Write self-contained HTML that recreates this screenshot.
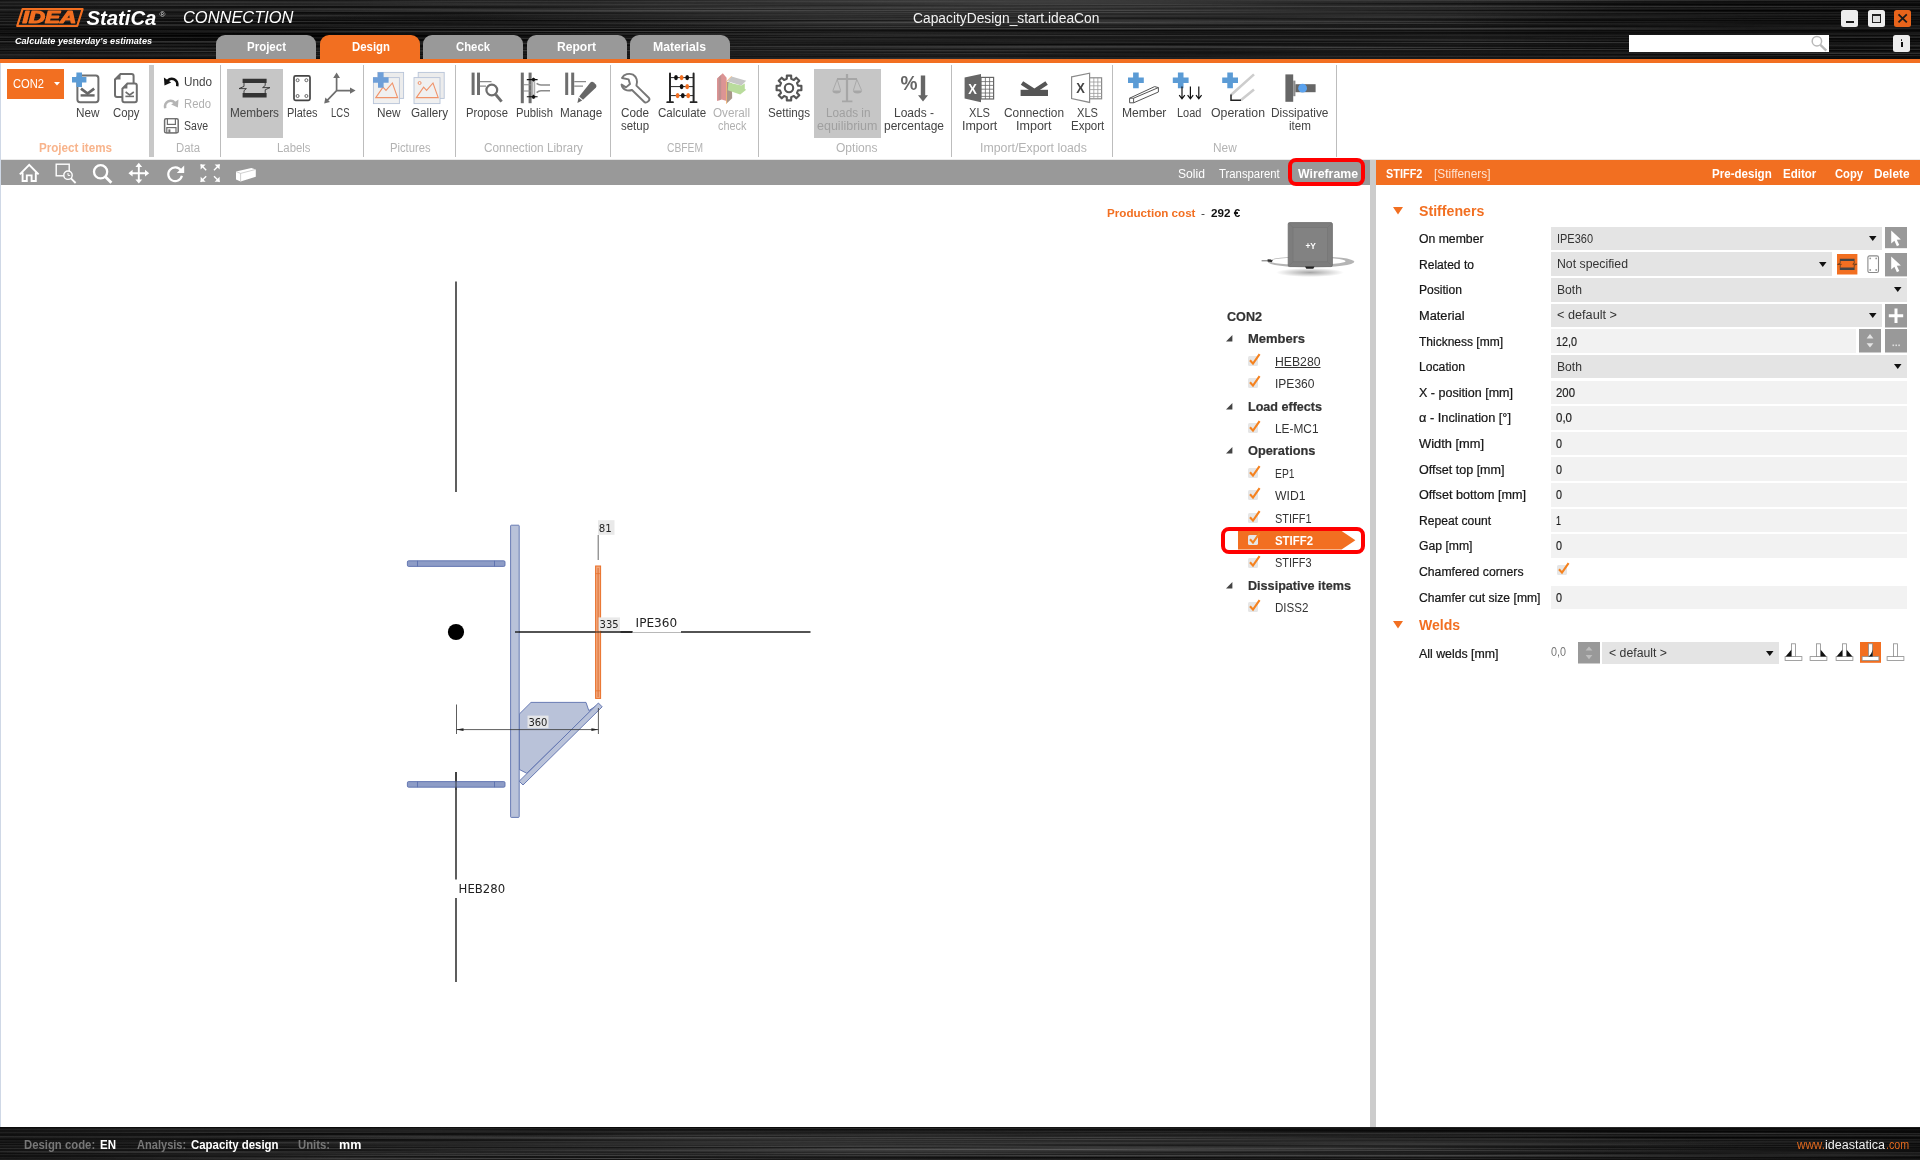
<!DOCTYPE html>
<html lang="en"><head><meta charset="utf-8"><title>IDEA StatiCa Connection</title>
<style>

html,body{margin:0;padding:0;background:#fff;}
body{width:1920px;height:1160px;overflow:hidden;font-family:"Liberation Sans",sans-serif;}
#app{position:relative;width:1920px;height:1160px;overflow:hidden;background:#fff;opacity:.999;}
.t{position:absolute;white-space:pre;display:inline-block;transform-origin:0 50%;}
.b{position:absolute;}
svg{position:absolute;overflow:visible;}
.hdr{left:0;top:0;width:1920px;height:59px;background:linear-gradient(90deg,rgba(0,0,0,.25) 0,rgba(0,0,0,0) 400px,rgba(0,0,0,0) 1450px,rgba(0,0,0,.55) 1750px,rgba(0,0,0,.6) 1920px),radial-gradient(ellipse 620px 30px at 1010px 4px,#3e3e3e 0,#333 40%,rgba(30,30,30,0) 100%),radial-gradient(ellipse 500px 22px at 300px 34px,#050505 0,rgba(10,10,10,0) 100%),linear-gradient(180deg,#1f1f1f 0,#191919 30px,#1c1c1c 59px);}
.ftr{left:0;top:1127px;width:1920px;height:33px;background:radial-gradient(ellipse 760px 16px at 980px 18px,#3a3a3a 0,#303030 45%,rgba(30,30,30,0) 100%),linear-gradient(90deg,rgba(0,0,0,.3) 0,rgba(0,0,0,0) 350px,rgba(0,0,0,0) 1550px,rgba(0,0,0,.4) 1920px),linear-gradient(180deg,#0a0a0a 0,#171717 6px,#191919 20px,#1c1c1c 33px);}
.tab{top:35px;height:24px;width:100px;border-radius:9px 9px 0 0;background:#999;}
.sep{top:65px;width:1px;height:92px;background:#bdbdbd;}
.fld{background:#e4e4e4;height:23px;}
.inp{background:#f2f2f2;height:23px;}
.gbtn{background:#999;height:23px;width:22px;}

</style></head><body>
<div id="app">
<div class="b hdr"></div>
<svg style="left:0;top:0" width="1920" height="59"><defs><filter id="br" x="0" y="0" width="100%" height="100%" color-interpolation-filters="sRGB"><feTurbulence type="fractalNoise" baseFrequency="0.0012 0.75" numOctaves="3" seed="7"/><feColorMatrix values="0 0 0 0 1  0 0 0 0 1  0 0 0 0 1  0.5 0 0 0 -0.2"/></filter><filter id="bk" x="0" y="0" width="100%" height="100%" color-interpolation-filters="sRGB"><feTurbulence type="fractalNoise" baseFrequency="0.0015 0.6" numOctaves="2" seed="21"/><feColorMatrix values="0 0 0 0 0  0 0 0 0 0  0 0 0 0 0  1.5 0 0 0 -0.55"/></filter></defs><rect width="1920" height="59" filter="url(#br)"/><rect width="1920" height="59" filter="url(#bk)"/></svg>
<div class="b" style="left:0px;top:59px;width:1920px;height:4.5px;background:#f26f21;"></div>
<div class="b tab" style="left:216px;background:#999"></div>
<div class="b tab" style="left:320px;background:#f26f21"></div>
<div class="b tab" style="left:423px;background:#999"></div>
<div class="b tab" style="left:527px;background:#999"></div>
<div class="b tab" style="left:630px;background:#999"></div>
<div class="b" style="left:1841px;top:10px;width:17px;height:17px;background:#ededed;border-radius:2.5px;"></div>
<div class="b" style="left:1867.8px;top:10px;width:17px;height:17px;background:#ededed;border-radius:2.5px;"></div>
<div class="b" style="left:1894px;top:10px;width:17px;height:17px;background:#e8641b;border-radius:2.5px;"></div>
<div class="b" style="left:1845.8px;top:20.8px;width:8px;height:1.9px;background:#1a1a1a;"></div>
<div class="b" style="left:1871.8px;top:13.9px;width:9px;height:9px;background:#e0e0e0;border:1.2px solid #222;border-top-width:2.3px;box-sizing:border-box;"></div>
<svg style="left:1894px;top:10px" width="17" height="17" viewBox="0 0 17 17"><path d="M4.5 4.4 L12.8 12.4 M12.8 4.4 L4.5 12.4" stroke="#1a1a1a" stroke-width="1.8" fill="none"/></svg>
<div class="b" style="left:1629px;top:35px;width:199.5px;height:17px;background:#fff;"></div>
<svg style="left:1808px;top:34px" width="22" height="19" viewBox="1808 34 22 19"><circle cx="1816.9" cy="41.2" r="4.7" fill="none" stroke="#b8b8b8" stroke-width="1.5"/><path d="M1820.4 44.9 L1826.3 50.6" stroke="#b8b8b8" stroke-width="2.3"/></svg>
<div class="b" style="left:1893px;top:35px;width:17px;height:17px;background:#ededed;border-radius:2.5px;"></div>
<div class="b" style="left:1900.6px;top:38.8px;width:1.9px;height:1.9px;background:#111;border-radius:1px;"></div>
<div class="b" style="left:1900.5px;top:42px;width:2.1px;height:5.2px;background:#111;"></div>
<div class="b" style="left:0px;top:63px;width:1920px;height:95px;background:#fff;"></div>
<div class="b" style="left:0px;top:158.5px;width:1920px;height:1px;background:#e9e9e9;"></div>
<div class="b" style="left:149px;top:65px;width:5px;height:92px;background:#c8c8c8;"></div>
<div class="b sep" style="left:220px"></div>
<div class="b sep" style="left:363px"></div>
<div class="b sep" style="left:455px"></div>
<div class="b sep" style="left:610px"></div>
<div class="b sep" style="left:758px"></div>
<div class="b sep" style="left:951px"></div>
<div class="b sep" style="left:1112px"></div>
<div class="b sep" style="left:1336px"></div>
<div class="b" style="left:7px;top:69px;width:57px;height:30px;background:#f26f21;"></div>
<svg style="left:54px;top:82px" width="7" height="4"><path d="M0 0h6l-3 3.5z" fill="#fff"/></svg>
<div class="b" style="left:227px;top:69px;width:56px;height:69px;background:#c6c6c6;"></div>
<div class="b" style="left:814px;top:69px;width:67px;height:69px;background:#c6c6c6;"></div>
<div class="b" style="left:0px;top:159.5px;width:1370px;height:25.5px;background:#999;"></div>
<div class="b" style="left:1288px;top:158px;width:77px;height:28px;box-sizing:border-box;border:4px solid #f00;border-radius:8px;"></div>
<div class="b" style="left:1370px;top:160px;width:6px;height:967px;background:#ccc;"></div>
<div class="b" style="left:0px;top:63px;width:1px;height:1064px;background:#cfd8e6;"></div>
<svg style="left:1238px;top:531.3px" width="118" height="19"><path d="M0 0 H103.6 L117.4 9.25 L103.6 18.5 H0 Z" fill="#f26f21"/></svg>
<svg style="left:1225.6px;top:335.4px" width="7" height="7"><path d="M6.4 0 V6.4 H0 Z" fill="#444"/></svg>
<svg style="left:1248px;top:352.9px" width="13" height="13" viewBox="0 0 13 13"><rect x="0" y="3" width="10" height="10" rx="1.6" fill="#e6e6e6"/><path d="M2 7.2 L5 10.6 L11.6 1.2" fill="none" stroke="#f5821f" stroke-width="2.1"/></svg>
<svg style="left:1248px;top:375.3px" width="13" height="13" viewBox="0 0 13 13"><rect x="0" y="3" width="10" height="10" rx="1.6" fill="#e6e6e6"/><path d="M2 7.2 L5 10.6 L11.6 1.2" fill="none" stroke="#f5821f" stroke-width="2.1"/></svg>
<svg style="left:1225.6px;top:402.6px" width="7" height="7"><path d="M6.4 0 V6.4 H0 Z" fill="#444"/></svg>
<svg style="left:1248px;top:420.1px" width="13" height="13" viewBox="0 0 13 13"><rect x="0" y="3" width="10" height="10" rx="1.6" fill="#e6e6e6"/><path d="M2 7.2 L5 10.6 L11.6 1.2" fill="none" stroke="#f5821f" stroke-width="2.1"/></svg>
<svg style="left:1225.6px;top:447.4px" width="7" height="7"><path d="M6.4 0 V6.4 H0 Z" fill="#444"/></svg>
<svg style="left:1248px;top:464.9px" width="13" height="13" viewBox="0 0 13 13"><rect x="0" y="3" width="10" height="10" rx="1.6" fill="#e6e6e6"/><path d="M2 7.2 L5 10.6 L11.6 1.2" fill="none" stroke="#f5821f" stroke-width="2.1"/></svg>
<svg style="left:1248px;top:487.3px" width="13" height="13" viewBox="0 0 13 13"><rect x="0" y="3" width="10" height="10" rx="1.6" fill="#e6e6e6"/><path d="M2 7.2 L5 10.6 L11.6 1.2" fill="none" stroke="#f5821f" stroke-width="2.1"/></svg>
<svg style="left:1248px;top:509.7px" width="13" height="13" viewBox="0 0 13 13"><rect x="0" y="3" width="10" height="10" rx="1.6" fill="#e6e6e6"/><path d="M2 7.2 L5 10.6 L11.6 1.2" fill="none" stroke="#f5821f" stroke-width="2.1"/></svg>
<svg style="left:1248px;top:532.1px" width="13" height="13" viewBox="0 0 13 13"><rect x="0" y="3" width="10" height="10" rx="1.6" fill="#e6e6e6"/><path d="M2 7.2 L5 10.6 L11.6 1.2" fill="none" stroke="#f5821f" stroke-width="2.1"/></svg>
<svg style="left:1248px;top:554.5px" width="13" height="13" viewBox="0 0 13 13"><rect x="0" y="3" width="10" height="10" rx="1.6" fill="#e6e6e6"/><path d="M2 7.2 L5 10.6 L11.6 1.2" fill="none" stroke="#f5821f" stroke-width="2.1"/></svg>
<svg style="left:1225.6px;top:581.8px" width="7" height="7"><path d="M6.4 0 V6.4 H0 Z" fill="#444"/></svg>
<svg style="left:1248px;top:599.3px" width="13" height="13" viewBox="0 0 13 13"><rect x="0" y="3" width="10" height="10" rx="1.6" fill="#e6e6e6"/><path d="M2 7.2 L5 10.6 L11.6 1.2" fill="none" stroke="#f5821f" stroke-width="2.1"/></svg>
<div class="b" style="left:1221px;top:526.8px;width:144px;height:27px;box-sizing:border-box;border:4px solid #f00;border-radius:8px;"></div>
<div class="b" style="left:1376px;top:159.6px;width:544px;height:25.2px;background:#f26f21;"></div>
<svg style="left:1393px;top:207px" width="11" height="8"><path d="M0 0H10L5 7.5Z" fill="#f26f21"/></svg>
<svg style="left:1393px;top:620.6px" width="11" height="8"><path d="M0 0H10L5 7.5Z" fill="#f26f21"/></svg>
<div class="b" style="left:1551px;top:226.8px;width:330.5px;height:23.5px;background:#e4e4e4;"></div>
<svg style="left:1868.5px;top:236.1px" width="8" height="5"><path d="M0 0H7.5L3.75 5Z" fill="#111"/></svg>
<div class="b" style="left:1551px;top:252.4px;width:281px;height:23.5px;background:#e4e4e4;"></div>
<svg style="left:1819px;top:261.7px" width="8" height="5"><path d="M0 0H7.5L3.75 5Z" fill="#111"/></svg>
<div class="b" style="left:1551px;top:278.0px;width:356px;height:23.5px;background:#e4e4e4;"></div>
<svg style="left:1894px;top:287.3px" width="8" height="5"><path d="M0 0H7.5L3.75 5Z" fill="#111"/></svg>
<div class="b" style="left:1551px;top:303.7px;width:330.5px;height:23.5px;background:#e4e4e4;"></div>
<svg style="left:1868.5px;top:313.0px" width="8" height="5"><path d="M0 0H7.5L3.75 5Z" fill="#111"/></svg>
<div class="b" style="left:1551px;top:329.3px;width:305px;height:23.5px;background:#f2f2f2;"></div>
<div class="b" style="left:1551px;top:354.9px;width:356px;height:23.5px;background:#e4e4e4;"></div>
<svg style="left:1894px;top:364.2px" width="8" height="5"><path d="M0 0H7.5L3.75 5Z" fill="#111"/></svg>
<div class="b" style="left:1551px;top:380.5px;width:356px;height:23.5px;background:#f2f2f2;"></div>
<div class="b" style="left:1551px;top:406.1px;width:356px;height:23.5px;background:#f2f2f2;"></div>
<div class="b" style="left:1551px;top:431.8px;width:356px;height:23.5px;background:#f2f2f2;"></div>
<div class="b" style="left:1551px;top:457.4px;width:356px;height:23.5px;background:#f2f2f2;"></div>
<div class="b" style="left:1551px;top:483.0px;width:356px;height:23.5px;background:#f2f2f2;"></div>
<div class="b" style="left:1551px;top:508.6px;width:356px;height:23.5px;background:#f2f2f2;"></div>
<div class="b" style="left:1551px;top:534.2px;width:356px;height:23.5px;background:#f2f2f2;"></div>
<svg style="left:1556.5px;top:561.7px" width="13" height="13" viewBox="0 0 13 13"><rect x="0" y="3" width="10" height="10" rx="1.6" fill="#e6e6e6"/><path d="M2 7.2 L5 10.6 L11.6 1.2" fill="none" stroke="#f5821f" stroke-width="2.1"/></svg>
<div class="b" style="left:1551px;top:585.5px;width:356px;height:23.5px;background:#f2f2f2;"></div>
<svg style="left:1885px;top:226.8px" width="22" height="21.2" viewBox="0 0 22 21.2"><rect width="22" height="21.2" fill="#999"/><path d="M6.2 3.4 V16.6 L9.4 13.7 L11.9 19.2 L14.3 18.1 L11.8 12.8 L15.9 12.6 Z" fill="#fff"/></svg>
<svg style="left:1885px;top:252.6px" width="22" height="23.4" viewBox="0 0 22 23.4"><rect width="22" height="23.4" fill="#999"/><path d="M6.2 3.4 V16.6 L9.4 13.7 L11.9 19.2 L14.3 18.1 L11.8 12.8 L15.9 12.6 Z" fill="#fff"/></svg>
<svg style="left:1885px;top:303.7px" width="22" height="23.5"><rect width="22" height="23.5" fill="#999"/><path d="M11 4.5V19M3.8 11.75H18.2" stroke="#fff" stroke-width="3"/></svg>
<svg style="left:1859.4px;top:329.3px" width="22" height="23.5"><rect width="22" height="23.5" fill="#999"/><path d="M7.6 9.4 L11 5 L14.4 9.4Z M7.6 14.2 L11 18.6 L14.4 14.2Z" fill="#e4e4e4"/></svg>
<svg style="left:1885px;top:329.3px" width="22" height="23.5"><rect width="22" height="23.5" fill="#999"/><rect x="7.5" y="15.5" width="1.6" height="1.6" fill="#ddd"/><rect x="10.4" y="15.5" width="1.6" height="1.6" fill="#ddd"/><rect x="13.3" y="15.5" width="1.6" height="1.6" fill="#ddd"/></svg>
<svg style="left:1837px;top:253.8px" width="20.4" height="20.5" viewBox="0 0 20.4 20.5"><rect width="20.4" height="20.5" fill="#f26f21"/><path d="M2.8 5.9H17.6M2.8 14.7H17.6" stroke="#444" stroke-width="2.4"/><path d="M3.2 7V9.4L0.6 10.4H4.4L3.2 11.4V13.6 M17.2 7V9.2L15.8 10.2H19.8L17.2 11.2V13.6" stroke="#5a3a20" stroke-width="0.8" fill="none"/></svg>
<svg style="left:1866.6px;top:255px" width="13" height="19" viewBox="0 0 13 19"><rect x="0.9" y="0.9" width="10.6" height="16.6" rx="1.6" fill="#fff" stroke="#8a8a8a" stroke-width="1.1"/><circle cx="3.2" cy="3.4" r=".9" fill="#999"/><circle cx="9.2" cy="3.4" r=".9" fill="#999"/><circle cx="3.2" cy="15" r=".9" fill="#999"/><circle cx="9.2" cy="15" r=".9" fill="#999"/></svg>
<svg style="left:1577.7px;top:642px" width="22" height="21.5"><rect width="22" height="21.5" fill="#999"/><path d="M7.6 8.6 L11 4.4 L14.4 8.6Z M7.6 13 L11 17.2 L14.4 13Z" fill="#bdbdbd"/></svg>
<div class="b" style="left:1601.5px;top:642px;width:177.5px;height:21.5px;background:#e4e4e4;"></div>
<svg style="left:1766px;top:651px" width="8" height="5"><path d="M0 0H7.5L3.75 5Z" fill="#111"/></svg>
<svg style="left:1782.7px;top:642.2px" width="21" height="21" viewBox="0 0 21 21"><rect x="2.1" y="14.6" width="16.8" height="3.9" fill="#fff" stroke="#8c8c8c" stroke-width="0.8"/><rect x="8.5" y="1.8" width="4" height="12.8" fill="#fff" stroke="#8c8c8c" stroke-width="0.8"/><path d="M8.3 14.5 V7.8 L2.6 14.5Z" fill="#111"/></svg>
<svg style="left:1808.1px;top:642.2px" width="21" height="21" viewBox="0 0 21 21"><rect x="2.1" y="14.6" width="16.8" height="3.9" fill="#fff" stroke="#8c8c8c" stroke-width="0.8"/><rect x="8.5" y="1.8" width="4" height="12.8" fill="#fff" stroke="#8c8c8c" stroke-width="0.8"/><path d="M12.7 14.5 V7.8 L18.4 14.5Z" fill="#111"/></svg>
<svg style="left:1833.7px;top:642.2px" width="21" height="21" viewBox="0 0 21 21"><rect x="2.1" y="14.6" width="16.8" height="3.9" fill="#fff" stroke="#8c8c8c" stroke-width="0.8"/><rect x="8.5" y="1.8" width="4" height="12.8" fill="#fff" stroke="#8c8c8c" stroke-width="0.8"/><path d="M8.3 14.5 V7.8 L2.6 14.5Z" fill="#111"/><path d="M12.7 14.5 V7.8 L18.4 14.5Z" fill="#111"/></svg>
<svg style="left:1859.8px;top:642.2px" width="21" height="21" viewBox="0 0 21 21"><rect x="0" y="0" width="21" height="20.8" fill="#f26f21"/><rect x="2.1" y="14.6" width="16.8" height="3.9" fill="#fff" stroke="#8c8c8c" stroke-width="0.8"/><rect x="8.5" y="1.8" width="4" height="12.8" fill="#fff" stroke="#8c8c8c" stroke-width="0.8"/><path d="M12.6 14.5 V7.5 C12 11 10.6 13 8.6 14.5Z" fill="#111"/></svg>
<svg style="left:1885.1px;top:642.2px" width="21" height="21" viewBox="0 0 21 21"><rect x="2.1" y="14.6" width="16.8" height="3.9" fill="#fff" stroke="#8c8c8c" stroke-width="0.8"/><rect x="8.5" y="1.8" width="4" height="12.8" fill="#fff" stroke="#8c8c8c" stroke-width="0.8"/></svg>
<div class="b ftr"></div>
<svg style="left:0;top:1127px" width="1920" height="33"><rect width="1920" height="33" filter="url(#br)"/><rect width="1920" height="33" filter="url(#bk)"/></svg>
<svg style="left:0;top:0" width="310" height="58" viewBox="0 0 310 58">
<path d="M22.6 9 H82.6 L77.2 26 H17.2 Z" fill="none" stroke="#f26f21" stroke-width="2.2" stroke-linejoin="round"/>
<text x="22.4" y="23.4" font-family="Liberation Sans, sans-serif" font-size="16.2" font-weight="700" font-style="italic" fill="#f26f21" textLength="54" lengthAdjust="spacingAndGlyphs" stroke="#f26f21" stroke-width="1.1" stroke-linejoin="round">IDEA</text>
<text x="86.4" y="24.5" font-family="Liberation Sans, sans-serif" font-size="20.4" font-weight="700" font-style="italic" fill="#fff" textLength="70" lengthAdjust="spacingAndGlyphs">StatiCa</text>
<text x="159.6" y="16.6" font-family="Liberation Sans, sans-serif" font-size="8" fill="#ddd">®</text>
<text x="183" y="23.2" font-family="Liberation Sans, sans-serif" font-size="15.8" font-style="italic" fill="#fff" textLength="110.5" lengthAdjust="spacingAndGlyphs">CONNECTION</text>
<text x="15" y="43.5" font-family="Liberation Sans, sans-serif" font-size="9.5" font-weight="700" font-style="italic" fill="#fff" textLength="137" lengthAdjust="spacingAndGlyphs">Calculate yesterday's estimates</text>
</svg>
<svg style="left:0;top:185px" width="1369" height="942" viewBox="0 185 1369 942" font-family="Liberation Sans, sans-serif">
<g stroke="#1a1a1a" stroke-width="1.4" fill="none">
<path d="M456 281.5 V492"/><path d="M456 772 V879.5 M456 898 V982"/>
<path d="M515 632 H810.5"/>
</g>
<!-- column stiffeners -->
<g fill="#8d9cc6" stroke="#5b6fae" stroke-width="0.9">
<rect x="407.4" y="560.8" width="97.6" height="5.6" rx="1.2"/><path d="M417.5 560.8v5.6M494.5 560.8v5.6"/>
<rect x="407.4" y="781.6" width="97.6" height="5.6" rx="1.2"/><path d="M417.5 781.6v5.6M494.5 781.6v5.6"/>
</g>
<path d="M456 772 V790" stroke="#1a1a1a" stroke-width="1.4" opacity=".55"/>
<!-- haunch web -->
<path d="M519.2 714.2 L531 702.4 H586 L588.8 710.6 L596 706 L526.8 773.3 L519.2 769.4 Z" fill="#b9c2d9" stroke="#5b6fae" stroke-width="0.9"/>
<!-- haunch flange -->
<path d="M598.4 703 L602.2 706.8 L523 785 L519.2 781.2 Z" fill="#b9c2d9" stroke="#5b6fae" stroke-width="0.9"/>
<!-- end plate -->
<rect x="510.6" y="525.2" width="8.6" height="292.2" rx="0.7" fill="#b9c2d9" stroke="#5b6fae" stroke-width="0.9"/>
<path d="M515 632 H520" stroke="#1a1a1a" stroke-width="1.4"/>
<!-- selected stiffener -->
<rect x="595.6" y="566" width="5" height="132.4" fill="#f3a77c" stroke="#e8702a" stroke-width="1"/>
<path d="M598.1 568 V697" stroke="#d9692a" stroke-width="0.9"/><path d="M595.6 573.6h5M595.6 690.8h5" stroke="#e8702a" stroke-width="0.7"/><path d="M595 632 H601.4" stroke="#1a1a1a" stroke-width="1.4" opacity=".7"/>
<circle cx="456" cy="632" r="8.1" fill="#000"/>
<!-- dimension 360 -->
<g stroke="#333" stroke-width="0.8" fill="none"><path d="M456.5 704.5 V734 M598.4 708 V734 M456.5 729.6 H598.4"/></g>
<path d="M456.5 729.6 l7 -1.3 v2.6z M598.4 729.6 l-7 -1.3 v2.6z" fill="#222"/>
<path d="M598.2 535 V560" stroke="#444" stroke-width="0.8"/>
<rect x="598" y="520.2" width="16.5" height="14.6" fill="#e9e9e9"/>
<rect x="598.6" y="617.4" width="21.4" height="13.4" fill="#e9e9e9"/>
<rect x="527.5" y="715.6" width="21" height="12.6" fill="#e9e9e9" opacity=".9"/>
<rect x="620" y="614" width="12.5" height="16" fill="#fff"/>
<rect x="632.5" y="614" width="48.5" height="19" fill="#fff"/>
<path d="M620.5 632 H632.5" stroke="#1a1a1a" stroke-width="1.4"/><path d="M632.5 632.5 H681" stroke="#9a9a9a" stroke-width="0.7"/>
<g font-family="DejaVu Sans, sans-serif" fill="#222">
<text x="598.8" y="531.8" font-size="11" textLength="13" lengthAdjust="spacingAndGlyphs">81</text>
<text x="599.6" y="628.4" font-size="11" textLength="19" lengthAdjust="spacingAndGlyphs">335</text>
<text x="528.4" y="726" font-size="11" textLength="19" lengthAdjust="spacingAndGlyphs">360</text>
<text x="635.6" y="627.4" font-size="13" textLength="41.5" lengthAdjust="spacingAndGlyphs">IPE360</text>
<text x="458.6" y="893.4" font-size="13" textLength="46.5" lengthAdjust="spacingAndGlyphs">HEB280</text>
</g>
</svg>
<svg style="left:1255px;top:218px" width="108" height="62" viewBox="1255 218 108 62">
<defs><radialGradient id="sh" cx="50%" cy="50%" r="50%"><stop offset="0" stop-color="#000" stop-opacity=".35"/><stop offset="1" stop-color="#000" stop-opacity="0"/></radialGradient></defs>
<ellipse cx="1310" cy="272.5" rx="34" ry="4.5" fill="url(#sh)"/>
<ellipse cx="1311" cy="261.8" rx="43.4" ry="5.6" fill="#b4b4b4"/><ellipse cx="1307.6" cy="261.2" rx="38" ry="3.7" fill="#fff"/>
<path d="M1261.6 260.8 h7" stroke="#444" stroke-width="0.8"/><path d="M1267.6 259.2 l5.4 0.4 -1.2 2.6 -4.2 -0.6z" fill="#333"/>
<rect x="1288.2" y="222.6" width="44.2" height="44" rx="1.5" fill="#7d7d7d" stroke="#6a6a6a" stroke-width="0.8"/>
<rect x="1293" y="227.4" width="34.6" height="34.4" fill="#828282" stroke="#747474" stroke-width="0.6"/>
<path d="M1288.5 223 l4.5 4.4 M1332 223 l-4.4 4.4 M1288.5 266.3 l4.5 -4.5 M1332 266.3 l-4.4 -4.5" stroke="#747474" stroke-width=".6"/>
<path d="M1305 266.6 h9.5 l-1.2 2.2 h-7z" fill="#222"/>
<text x="1305.4" y="249.2" font-family="Liberation Sans, sans-serif" font-size="8.5" font-weight="700" fill="#fff" textLength="10.5" lengthAdjust="spacingAndGlyphs">+Y</text>
</svg>
<svg style="left:0;top:63px" width="1920" height="97" viewBox="0 63 1920 97"><rect x="77.4" y="75.6" width="21" height="26.6" rx="2.6" fill="#fff" stroke="#6e6e6e" stroke-width="2"/><path d="M81 88.6 L87.6 93.6 L94.2 88.6" fill="none" stroke="#666" stroke-width="2.7"/><rect x="80.6" y="94.2" width="14" height="2.4" fill="#666"/><path d="M72 77.0h14.4v5.6h-14.4z M76.4 72.6h5.6v14.4h-5.6z" fill="#5b9bd5"/><path d="M120.5 74 H131.6 a2 2 0 0 1 2 2 V95 a2 2 0 0 1 -2 2 H117 a2 2 0 0 1 -2 -2 V79.5 Z" fill="#fff" stroke="#6e6e6e" stroke-width="2"/><path d="M115 79.5 L120.5 74 V79.5 Z" fill="#6e6e6e"/><path d="M127.4 83.6 H134.8 a2 2 0 0 1 2 2 V100.19999999999999 a2 2 0 0 1 -2 2 H124.4 a2 2 0 0 1 -2 -2 V88.6 Z" fill="#fff" stroke="#6e6e6e" stroke-width="2"/><path d="M122.4 88.6 L127.4 83.6 V88.6 Z" fill="#6e6e6e"/><path d="M125.6 92 L129.7 95 L133.8 92" fill="none" stroke="#6e6e6e" stroke-width="1.6"/><rect x="125.4" y="95.6" width="8.6" height="1.6" fill="#6e6e6e"/><g><path d="M177.2 86.2 C178.4 79.6 171.6 76.6 167.4 80.8" fill="none" stroke="#111" stroke-width="2.5"/><path d="M163.9 77.6 L171.2 82.4 L164.5 85.6 Z" fill="#111"/></g><g transform="translate(342.4,0) scale(-1,1)"><path d="M177.2 108.2 C178.4 101.6 171.6 98.6 167.4 102.8" fill="none" stroke="#b4b4b4" stroke-width="2.5"/><path d="M163.9 99.6 L171.2 104.4 L164.5 107.6 Z" fill="#b4b4b4"/></g><rect x="164.6" y="118.8" width="13.6" height="14" rx="1.4" fill="#fff" stroke="#6e6e6e" stroke-width="1.5"/><rect x="167.4" y="118.8" width="8" height="5.6" fill="#fff" stroke="#6e6e6e" stroke-width="1.2"/><rect x="166.8" y="127.6" width="9.2" height="5.2" fill="#fff" stroke="#6e6e6e" stroke-width="1.2"/><rect x="168.4" y="129.4" width="2" height="3.4" fill="#6e6e6e"/><g stroke="#333" fill="none"><path d="M242.6 80.9H266.6M242.6 95.3H266.6" stroke-width="4.4"/><path d="M244 83V86.4L239 88.6H246.4L244 90.6V93.2 M265.2 83V85.6L262.6 87.6H270L265.2 89.8V93.2" stroke-width="0.9"/></g><rect x="294" y="75.8" width="16" height="24.6" rx="1.6" fill="#fff" stroke="#444" stroke-width="1.7"/><circle cx="297.6" cy="80.2" r="1.5" fill="none" stroke="#555" stroke-width="0.9"/><circle cx="306.4" cy="80.2" r="1.5" fill="none" stroke="#555" stroke-width="0.9"/><circle cx="297.6" cy="96" r="1.5" fill="none" stroke="#555" stroke-width="0.9"/><circle cx="306.4" cy="96" r="1.5" fill="none" stroke="#555" stroke-width="0.9"/><g stroke="#6e6e6e" stroke-width="1.7" fill="none"><path d="M336.6 90.6V76M336.6 90.6H351M336.6 90.6L327 100.6"/></g><path d="M336.6 72.6l3.4 5.4h-6.8z M355.6 90.6l-5.6 3.2v-6.4z M324.2 103.6l1.2-6 4.6 4.4z" fill="#6e6e6e"/><rect x="377.6" y="72.4" width="26" height="26" fill="#ececec" stroke="#b7c3d8" stroke-width="0.9"/><rect x="373.4" y="77.6" width="26" height="26" fill="#f0f0f0" stroke="#b7c3d8" stroke-width="0.9"/><path d="M375.8 97.6 L383 87.2 L386 90.4 L392.4 83 L397.6 97.6 Z" fill="none" stroke="#f0936a" stroke-width="1.1"/><path d="M373 77.2h15.6v5.6h-15.6z M378.0 72.2h5.6v15.6h-5.6z" fill="#6f9fd8"/><rect x="418.20000000000005" y="72.4" width="26" height="26" fill="#ececec" stroke="#b7c3d8" stroke-width="0.9"/><rect x="414.0" y="77.6" width="26" height="26" fill="#f0f0f0" stroke="#b7c3d8" stroke-width="0.9"/><path d="M416.4 97.6 L423.6 87.2 L426.6 90.4 L433 83 L438.2 97.6 Z" fill="none" stroke="#f0936a" stroke-width="1.1"/><circle cx="419.6" cy="83" r="1.5" fill="none" stroke="#f0936a" stroke-width="1"/><g fill="#6e6e6e"><rect x="471.6" y="72.6" width="3" height="22.4"/><rect x="477" y="72.6" width="3" height="22.4"/></g><path d="M480 81.6H491.5M480 86.2H486" stroke="#8a8a8a" stroke-width="1.2"/><circle cx="491.8" cy="90" r="5.4" fill="#fff" stroke="#6e6e6e" stroke-width="2.2"/><path d="M495.8 94.6L501.6 101.6" stroke="#6e6e6e" stroke-width="3"/><g fill="#6e6e6e"><rect x="520.8" y="72.6" width="3" height="30.6"/><rect x="528.6" y="72.6" width="3" height="30.6"/></g><rect x="532.2" y="78.4" width="2.6" height="20" fill="#ddd" stroke="#888" stroke-width="0.7"/><path d="M526.8 79.6H537.6M526.8 96.8H537.6" stroke="#111" stroke-width="1.1"/><path d="M533.5 77.4l2.2 2.2-2.2 2.2-2.2-2.2z M533.5 94.6l2.2 2.2-2.2 2.2-2.2-2.2z" fill="#111"/><path d="M523.8 84.8H531 M523.8 91H531" stroke="#8a8a8a" stroke-width="1.1"/><path d="M536.6 83.4 C538.4 85 539.4 85 541 85 H550 M536.6 92.6 C538.4 91 539.4 90.8 541 90.8 H550" fill="none" stroke="#8a8a8a" stroke-width="1.5"/><g fill="#6e6e6e"><rect x="565.2" y="72.6" width="3" height="22.4"/><rect x="571.2" y="72.6" width="3" height="22.4"/></g><path d="M574.2 81.6H586M574.2 86.2H583" stroke="#8a8a8a" stroke-width="1.2"/><path d="M590.2 82.8 a2.6 2.6 0 0 1 3.6 -0.2 l1.8 1.6 a2.6 2.6 0 0 1 0.2 3.6 L583 99.8 L579.2 96.4 Z" fill="#666"/><path d="M578.6 97.4 L582.2 100.6 L577.4 103 Z" fill="#666"/><path d="M633 74.6 C629 73 624 74 622 78 L628.6 79.4 L630 84 L626 87.4 L621.6 84.6 C622 89 627 91.6 632 90 L644.6 102.2 C646.6 103.6 650.6 100 649 98 L636.4 85.6 C638 81.2 636.6 76.6 633 74.6 Z" fill="#fff" stroke="#777" stroke-width="1.9" stroke-linejoin="round"/><g stroke="#262626" fill="none"><path d="M670 73.6V101.6M693.6 73.6V101.6" stroke-width="2" stroke-linecap="round"/><path d="M667.2 102.2H673M690.6 102.2H696.6" stroke-width="1.8" stroke-linecap="round"/><path d="M670 77.6H694M670 86.6H694M670 95.6H694" stroke-width="1"/></g><ellipse cx="676" cy="77.6" rx="1.9" ry="2.6" fill="#111"/><ellipse cx="681.6" cy="77.6" rx="1.9" ry="2.6" fill="#f26f21"/><ellipse cx="687.2" cy="77.6" rx="1.9" ry="2.6" fill="#111"/><ellipse cx="681.6" cy="86.6" rx="1.9" ry="2.6" fill="#111"/><ellipse cx="687.2" cy="86.6" rx="1.9" ry="2.6" fill="#f26f21"/><ellipse cx="677.6" cy="95.6" rx="1.9" ry="2.6" fill="#f26f21"/><ellipse cx="682.8" cy="95.6" rx="1.9" ry="2.6" fill="#111"/><ellipse cx="688.2" cy="95.6" rx="1.9" ry="2.6" fill="#f26f21"/><g><path d="M717 78.4 L722.8 73.2 L726.6 77.8 V101 L721.6 99.4 L717 101 Z" fill="#dc9494"/><path d="M718.6 77.2 L721.2 75 V99.6 L718.6 100.4Z" fill="#bf9090"/><path d="M726.6 81.4 L731.8 83.2 L732.2 98.2 L726.6 103.6 Z" fill="#a8968a"/><path d="M727.6 81.2 L731.6 76.6 L746.2 80.8 L741.4 85.6 Z" fill="#c6c6c6"/><path d="M728.4 82.6 L741.4 85.6 L744.8 83.6 V89 L746.2 89.8 L740.2 94.6 L727.8 90.2 Z" fill="#b9dc9c"/><path d="M731.6 76.2 L726.5 81.4 V103.8" fill="none" stroke="#f2b26e" stroke-width=".8"/></g><path d="M786.83 75.59 L791.17 75.59 L791.19 78.86 L793.91 79.99 L796.25 77.69 L799.31 80.75 L797.01 83.09 L798.14 85.81 L801.41 85.83 L801.41 90.17 L798.14 90.19 L797.01 92.91 L799.31 95.25 L796.25 98.31 L793.91 96.01 L791.19 97.14 L791.17 100.41 L786.83 100.41 L786.81 97.14 L784.09 96.01 L781.75 98.31 L778.69 95.25 L780.99 92.91 L779.86 90.19 L776.59 90.17 L776.59 85.83 L779.86 85.81 L780.99 83.09 L778.69 80.75 L781.75 77.69 L784.09 79.99 L786.81 78.86Z" fill="#fff" stroke="#555" stroke-width="2.1" stroke-linejoin="round"/><circle cx="789" cy="88" r="4.2" fill="#fff" stroke="#555" stroke-width="2.1"/><g stroke="#a6a6a6" fill="none"><path d="M847 74V101" stroke-width="2.2"/><path d="M837 79H857M842 101.4H852.4" stroke-width="1.8"/><path d="M837.2 79.4L833 90.4M837.2 79.4L840.6 90.4M856.8 79.4L853.4 90.4M856.8 79.4L861.6 90.4" stroke-width="0.9"/></g><path d="M832.4 90.4H841a4.3 3 0 0 1 -8.6 0z M853 90.4H862a4.5 3 0 0 1 -9 0z" fill="#a6a6a6"/><text x="900.4" y="90.2" font-family="Liberation Sans, sans-serif" font-weight="700" font-size="20.5" fill="#666" textLength="17" lengthAdjust="spacingAndGlyphs">%</text><path d="M920.8 75.6h4.4v19.6h2.8l-5 6.2-5-6.2h2.8z" fill="#666"/><path d="M964.6 77.6 L981 74 V102.2 L964.6 98.6 Z" fill="#666"/><rect x="981" y="77.4" width="12.6" height="21.6" fill="#fff" stroke="#666" stroke-width="1.2"/><path d="M981 81.6H993.6M981 85.4H993.6M981 89.2H993.6M981 93H993.6M981 96.4H993.6M985.4 77.4V99M989.6 77.4V99" stroke="#666" stroke-width="0.8"/><text x="968.2" y="93.6" font-family="Liberation Sans, sans-serif" font-weight="700" font-size="14.5" fill="#fff" textLength="8.6" lengthAdjust="spacingAndGlyphs">X</text><path d="M1022 83 L1034.4 91 L1046.6 83" fill="none" stroke="#555" stroke-width="4.4"/><rect x="1020.6" y="89.8" width="27.4" height="6.2" fill="#555"/><path d="M1071.6 76.8 L1089.6 73.2 V102.4 L1071.6 98.6 Z" fill="#fff" stroke="#8a8a8a" stroke-width="1.2"/><rect x="1089.6" y="77.8" width="12" height="21" fill="#fff" stroke="#8a8a8a" stroke-width="1.2"/><path d="M1089.6 82H1101.6M1089.6 85.8H1101.6M1089.6 89.6H1101.6M1089.6 93.4H1101.6M1089.6 96.6H1101.6M1093.8 77.8V98.8M1097.8 77.8V98.8" stroke="#9a9a9a" stroke-width="0.8"/><text x="1076.2" y="93.2" font-family="Liberation Sans, sans-serif" font-weight="700" font-size="14.5" fill="#444" textLength="8.6" lengthAdjust="spacingAndGlyphs">X</text><path d="M1128 77.5h15.8v5.6h-15.8z M1133.1 72.4h5.6v15.8h-5.6z" fill="#5b9bd5"/><path d="M1129.6 98.2 L1154.6 86.6 L1158.4 87.6 V92 L1133.6 102.8 L1129.6 102.8 Z" fill="#fff" stroke="#555" stroke-width="1"/><path d="M1129.6 98.2 H1133.6 V102.8 M1133.6 98.2 L1158.4 87.6" fill="none" stroke="#555" stroke-width="1"/><path d="M1172.8 77.5h15.8v5.6h-15.8z M1177.8999999999999 72.4h5.6v15.8h-5.6z" fill="#5b9bd5"/><path d="M1182 86.4V98.6M1179.2 95.2L1182 98.8L1184.8 95.2" fill="none" stroke="#111" stroke-width="1.2"/><path d="M1190.4 86.4V98.6M1187.6000000000001 95.2L1190.4 98.8L1193.2 95.2" fill="none" stroke="#111" stroke-width="1.2"/><path d="M1198.8 86.4V98.6M1196.0 95.2L1198.8 98.8L1201.6 95.2" fill="none" stroke="#111" stroke-width="1.2"/><path d="M1222.2 77.5h15.8v5.6h-15.8z M1227.3 72.4h5.6v15.8h-5.6z" fill="#5b9bd5"/><path d="M1231 95 L1254 74.4 M1240.8 100.2 L1254 89.4" stroke="#cdcdcd" stroke-width="2.6" fill="none"/><path d="M1231 94.6 V100.2 H1241" fill="none" stroke="#222" stroke-width="1.5"/><rect x="1285.4" y="74.4" width="7.8" height="27.4" fill="#666"/><rect x="1293.2" y="80.6" width="2.2" height="15.6" fill="#8a8a8a"/><rect x="1295.4" y="84.2" width="20.2" height="8" fill="#666"/><circle cx="1302.6" cy="88.2" r="4.4" fill="#5aa2ee"/></svg>
<svg style="left:0;top:159.4px" width="300" height="26" viewBox="0 160 300 26"><path d="M19.8 175.4 L29.2 165.8 L38.6 175.4 M22.6 173.6 V182 H26.8 V176.4 H31.6 V182 H35.8 V173.6" fill="none" stroke="#fff" stroke-width="1.9"/><rect x="56.2" y="165.2" width="13" height="11.6" fill="none" stroke="#fff" stroke-width="1.4"/><circle cx="68" cy="176.2" r="4.2" fill="#999" stroke="#fff" stroke-width="1.4"/><path d="M68 174v2.4h2.2" stroke="#fff" stroke-width="1" fill="none"/><path d="M71 179.4L75.6 184" stroke="#fff" stroke-width="1.8"/><circle cx="100.6" cy="172.8" r="6.6" fill="none" stroke="#fff" stroke-width="2.3"/><path d="M105.4 177.8L111.4 183.8" stroke="#fff" stroke-width="2.8"/><path d="M138.8 166V182.4M130.6 174.2H147" stroke="#fff" stroke-width="1.9"/><path d="M138.8 163.8l3.4 4.2h-6.8z M138.8 184.6l3.4-4.2h-6.8z M128.4 174.2l4.2-3.4v6.8z M149.2 174.2l-4.2-3.4v6.8z" fill="#fff"/><path d="M180.9 171.4 A6.9 6.9 0 1 0 181.9 176.8" fill="none" stroke="#fff" stroke-width="2.2"/><path d="M184.2 166.6V174H176.8z" fill="#fff"/><path d="M200.6 165.6l5.6 5.6" stroke="#fff" stroke-width="1.4"/><path d="M200.6 165.6h5l-5 5z" fill="#fff"/><path d="M219.6 165.6l-5.6 5.6" stroke="#fff" stroke-width="1.4"/><path d="M219.6 165.6h-5l5 5z" fill="#fff"/><path d="M200.6 182.8l5.6 -5.6" stroke="#fff" stroke-width="1.4"/><path d="M200.6 182.8h5l-5 -5z" fill="#fff"/><path d="M219.6 182.8l-5.6 -5.6" stroke="#fff" stroke-width="1.4"/><path d="M219.6 182.8h-5l5 -5z" fill="#fff"/><path d="M236 172.6 L251.4 169 L255.8 170.4 V177.8 L240.6 182.4 L236 180.6 Z" fill="#fff"/><path d="M236 172.6 L240.6 174.4 V182.4 M240.6 174.4 L255.8 170.4" fill="none" stroke="#bbb" stroke-width=".7"/></svg>
<span class="t" style="left:247.0px;top:39.4px;font-size:12.5px;line-height:16px;transform:scaleX(0.9200);color:#fff;font-weight:700;">Project</span>
<span class="t" style="left:351.5px;top:39.4px;font-size:12.5px;line-height:16px;transform:scaleX(0.9115);color:#fff;font-weight:700;">Design</span>
<span class="t" style="left:456.0px;top:39.4px;font-size:12.5px;line-height:16px;transform:scaleX(0.9059);color:#fff;font-weight:700;">Check</span>
<span class="t" style="left:557.0px;top:39.4px;font-size:12.5px;line-height:16px;transform:scaleX(0.9682);color:#fff;font-weight:700;">Report</span>
<span class="t" style="left:653.0px;top:39.4px;font-size:12.5px;line-height:16px;transform:scaleX(0.9778);color:#fff;font-weight:700;">Materials</span>
<span class="t" style="left:912.6px;top:9.4px;font-size:14px;line-height:18px;transform:scaleX(0.9857);color:#f2f2f2;">CapacityDesign_start.ideaCon</span>
<span class="t" style="left:13.0px;top:76.4px;font-size:12px;line-height:16px;transform:scaleX(0.9297);color:#fff;">CON2</span>
<span class="t" style="left:76.0px;top:105.4px;font-size:12px;line-height:16px;transform:scaleX(0.9785);color:#444;">New</span>
<span class="t" style="left:112.5px;top:105.4px;font-size:12px;line-height:16px;transform:scaleX(0.9459);color:#444;">Copy</span>
<span class="t" style="left:39.0px;top:139.8px;font-size:12px;line-height:16px;transform:scaleX(0.9685);color:#f8b48c;font-weight:700;">Project items</span>
<span class="t" style="left:184.0px;top:74.4px;font-size:12px;line-height:16px;transform:scaleX(0.9760);color:#444;">Undo</span>
<span class="t" style="left:184.0px;top:96.4px;font-size:12px;line-height:16px;transform:scaleX(0.9412);color:#b0b0b0;">Redo</span>
<span class="t" style="left:184.0px;top:118.4px;font-size:12px;line-height:16px;transform:scaleX(0.8772);color:#444;">Save</span>
<span class="t" style="left:176.0px;top:139.8px;font-size:12px;line-height:16px;transform:scaleX(0.9464);color:#b3b3b3;">Data</span>
<span class="t" style="left:230.0px;top:105.4px;font-size:12px;line-height:16px;transform:scaleX(0.9797);color:#444;">Members</span>
<span class="t" style="left:287.0px;top:105.4px;font-size:12px;line-height:16px;transform:scaleX(0.9143);color:#444;">Plates</span>
<span class="t" style="left:331.0px;top:105.4px;font-size:12px;line-height:16px;transform:scaleX(0.7925);color:#444;">LCS</span>
<span class="t" style="left:276.5px;top:139.8px;font-size:12px;line-height:16px;transform:scaleX(0.9470);color:#b3b3b3;">Labels</span>
<span class="t" style="left:377.0px;top:105.4px;font-size:12px;line-height:16px;transform:scaleX(0.9827);color:#444;">New</span>
<span class="t" style="left:411.0px;top:105.4px;font-size:12px;line-height:16px;transform:scaleX(0.9733);color:#444;">Gallery</span>
<span class="t" style="left:390.0px;top:139.8px;font-size:12px;line-height:16px;transform:scaleX(0.9364);color:#b3b3b3;">Pictures</span>
<span class="t" style="left:466.0px;top:105.4px;font-size:12px;line-height:16px;transform:scaleX(0.9395);color:#444;">Propose</span>
<span class="t" style="left:515.6px;top:105.4px;font-size:12px;line-height:16px;transform:scaleX(0.9375);color:#444;">Publish</span>
<span class="t" style="left:559.8px;top:105.4px;font-size:12px;line-height:16px;transform:scaleX(0.9741);color:#444;">Manage</span>
<span class="t" style="left:484.0px;top:139.8px;font-size:12px;line-height:16px;transform:scaleX(0.9828);color:#b3b3b3;">Connection Library</span>
<span class="t" style="left:621.0px;top:105.4px;font-size:12px;line-height:16px;transform:scaleX(0.9760);color:#444;">Code</span>
<span class="t" style="left:621.0px;top:118.0px;font-size:12px;line-height:16px;transform:scaleX(0.9537);color:#444;">setup</span>
<span class="t" style="left:657.8px;top:105.4px;font-size:12px;line-height:16px;transform:scaleX(0.9644);color:#444;">Calculate</span>
<span class="t" style="left:713.0px;top:105.4px;font-size:12px;line-height:16px;transform:scaleX(0.9733);color:#b0b0b0;">Overall</span>
<span class="t" style="left:717.5px;top:118.0px;font-size:12px;line-height:16px;transform:scaleX(0.9088);color:#b0b0b0;">check</span>
<span class="t" style="left:667.0px;top:139.8px;font-size:12px;line-height:16px;transform:scaleX(0.8571);color:#b3b3b3;">CBFEM</span>
<span class="t" style="left:768.0px;top:105.4px;font-size:12px;line-height:16px;transform:scaleX(0.9686);color:#444;">Settings</span>
<span class="t" style="left:825.5px;top:105.4px;font-size:12px;line-height:16px;transform:scaleX(0.9807);color:#a0a0a0;">Loads in</span>
<span class="t" style="left:817.0px;top:118.0px;font-size:12px;line-height:16px;transform:scaleX(1.0425);color:#a0a0a0;">equilibrium</span>
<span class="t" style="left:894.0px;top:105.4px;font-size:12px;line-height:16px;transform:scaleX(0.9992);color:#444;">Loads -</span>
<span class="t" style="left:884.0px;top:118.0px;font-size:12px;line-height:16px;transform:scaleX(0.9992);color:#444;">percentage</span>
<span class="t" style="left:835.5px;top:139.8px;font-size:12px;line-height:16px;transform:scaleX(1.0034);color:#b3b3b3;">Options</span>
<span class="t" style="left:968.5px;top:105.4px;font-size:12px;line-height:16px;transform:scaleX(0.9256);color:#444;">XLS</span>
<span class="t" style="left:961.7px;top:118.0px;font-size:12px;line-height:16px;transform:scaleX(1.0378);color:#444;">Import</span>
<span class="t" style="left:1004.0px;top:105.4px;font-size:12px;line-height:16px;transform:scaleX(0.9882);color:#444;">Connection</span>
<span class="t" style="left:1016.0px;top:118.0px;font-size:12px;line-height:16px;transform:scaleX(1.0436);color:#444;">Import</span>
<span class="t" style="left:1077.0px;top:105.4px;font-size:12px;line-height:16px;transform:scaleX(0.9256);color:#444;">XLS</span>
<span class="t" style="left:1070.7px;top:118.0px;font-size:12px;line-height:16px;transform:scaleX(0.9600);color:#444;">Export</span>
<span class="t" style="left:979.6px;top:139.8px;font-size:12px;line-height:16px;transform:scaleX(1.0274);color:#b3b3b3;">Import/Export loads</span>
<span class="t" style="left:1121.6px;top:105.4px;font-size:12px;line-height:16px;transform:scaleX(1.0087);color:#444;">Member</span>
<span class="t" style="left:1176.6px;top:105.4px;font-size:12px;line-height:16px;transform:scaleX(0.9138);color:#444;">Load</span>
<span class="t" style="left:1211.0px;top:105.4px;font-size:12px;line-height:16px;transform:scaleX(1.0246);color:#444;">Operation</span>
<span class="t" style="left:1271.0px;top:105.4px;font-size:12px;line-height:16px;transform:scaleX(0.9908);color:#444;">Dissipative</span>
<span class="t" style="left:1289.0px;top:118.0px;font-size:12px;line-height:16px;transform:scaleX(0.9704);color:#444;">item</span>
<span class="t" style="left:1213.0px;top:139.8px;font-size:12px;line-height:16px;transform:scaleX(0.9869);color:#b3b3b3;">New</span>
<span class="t" style="left:1178.0px;top:165.9px;font-size:12px;line-height:16px;transform:scaleX(1.0117);color:#fff;">Solid</span>
<span class="t" style="left:1219.0px;top:165.9px;font-size:12px;line-height:16px;transform:scaleX(0.9445);color:#fff;">Transparent</span>
<span class="t" style="left:1297.5px;top:165.9px;font-size:12px;line-height:16px;transform:scaleX(1.0240);color:#fff;font-weight:700;">Wireframe</span>
<span class="t" style="left:1107.0px;top:206.4px;font-size:11px;line-height:14px;transform:scaleX(1.0569);color:#f26f21;font-weight:700;">Production cost</span>
<span class="t" style="left:1201.0px;top:206.4px;font-size:11px;line-height:14px;transform:scaleX(1.0894);color:#333;">-</span>
<span class="t" style="left:1210.8px;top:206.4px;font-size:11px;line-height:14px;transform:scaleX(1.0606);color:#111;font-weight:700;">292 €</span>
<span class="t" style="left:1227.0px;top:309.4px;font-size:12.5px;line-height:16px;transform:scaleX(1.0076);color:#333;font-weight:700;-webkit-text-stroke:0.2px #333;">CON2</span>
<span class="t" style="left:1248.4px;top:331.4px;font-size:12.5px;line-height:16px;transform:scaleX(1.0384);color:#333;font-weight:700;-webkit-text-stroke:0.2px #333;">Members</span>
<span class="t" style="left:1275.4px;top:353.8px;font-size:12.5px;line-height:16px;transform:scaleX(0.9772);color:#333;text-decoration:underline;">HEB280</span>
<span class="t" style="left:1275.4px;top:376.2px;font-size:12.5px;line-height:16px;transform:scaleX(0.9630);color:#333;">IPE360</span>
<span class="t" style="left:1248.4px;top:398.6px;font-size:12.5px;line-height:16px;transform:scaleX(1.0049);color:#333;font-weight:700;-webkit-text-stroke:0.2px #333;">Load effects</span>
<span class="t" style="left:1275.4px;top:421.0px;font-size:12.5px;line-height:16px;transform:scaleX(0.9489);color:#333;">LE-MC1</span>
<span class="t" style="left:1248.4px;top:443.4px;font-size:12.5px;line-height:16px;transform:scaleX(1.0227);color:#333;font-weight:700;-webkit-text-stroke:0.2px #333;">Operations</span>
<span class="t" style="left:1275.4px;top:465.8px;font-size:12.5px;line-height:16px;transform:scaleX(0.8249);color:#333;">EP1</span>
<span class="t" style="left:1275.4px;top:488.2px;font-size:12.5px;line-height:16px;transform:scaleX(0.9760);color:#333;">WID1</span>
<span class="t" style="left:1275.4px;top:510.6px;font-size:12.5px;line-height:16px;transform:scaleX(0.8759);color:#333;">STIFF1</span>
<span class="t" style="left:1275.4px;top:533.0px;font-size:12.5px;line-height:16px;transform:scaleX(0.9119);color:#fff;font-weight:700;">STIFF2</span>
<span class="t" style="left:1275.4px;top:555.4px;font-size:12.5px;line-height:16px;transform:scaleX(0.8759);color:#333;">STIFF3</span>
<span class="t" style="left:1248.4px;top:577.8px;font-size:12.5px;line-height:16px;transform:scaleX(1.0084);color:#333;font-weight:700;-webkit-text-stroke:0.2px #333;">Dissipative items</span>
<span class="t" style="left:1275.4px;top:600.2px;font-size:12.5px;line-height:16px;transform:scaleX(0.9269);color:#333;">DISS2</span>
<span class="t" style="left:1385.6px;top:166.2px;font-size:12px;line-height:16px;transform:scaleX(0.9096);color:#fff;font-weight:700;">STIFF2</span>
<span class="t" style="left:1434.0px;top:166.2px;font-size:12px;line-height:16px;transform:scaleX(0.9888);color:#fde3d2;">[Stiffeners]</span>
<span class="t" style="left:1711.8px;top:166.2px;font-size:12px;line-height:16px;transform:scaleX(0.9627);color:#fff;font-weight:700;">Pre-design</span>
<span class="t" style="left:1782.7px;top:166.2px;font-size:12px;line-height:16px;transform:scaleX(0.9604);color:#fff;font-weight:700;">Editor</span>
<span class="t" style="left:1835.0px;top:166.2px;font-size:12px;line-height:16px;transform:scaleX(0.9333);color:#fff;font-weight:700;">Copy</span>
<span class="t" style="left:1873.5px;top:166.2px;font-size:12px;line-height:16px;transform:scaleX(0.9853);color:#fff;font-weight:700;">Delete</span>
<span class="t" style="left:1419.3px;top:201.4px;font-size:15px;line-height:20px;transform:scaleX(0.9438);color:#f26f21;font-weight:700;">Stiffeners</span>
<span class="t" style="left:1419.3px;top:615.3px;font-size:15px;line-height:20px;transform:scaleX(0.9384);color:#f26f21;font-weight:700;">Welds</span>
<span class="t" style="left:1419.0px;top:231.0px;font-size:12px;line-height:16px;transform:scaleX(1.0180);color:#161616;-webkit-text-stroke:0.22px #161616;">On member</span>
<span class="t" style="left:1556.9px;top:230.5px;font-size:12px;line-height:16px;transform:scaleX(0.9143);color:#333;">IPE360</span>
<span class="t" style="left:1419.0px;top:256.6px;font-size:12px;line-height:16px;transform:scaleX(1.0054);color:#161616;-webkit-text-stroke:0.22px #161616;">Related to</span>
<span class="t" style="left:1556.9px;top:256.1px;font-size:12px;line-height:16px;transform:scaleX(1.0234);color:#333;">Not specified</span>
<span class="t" style="left:1419.0px;top:282.2px;font-size:12px;line-height:16px;transform:scaleX(1.0070);color:#161616;-webkit-text-stroke:0.22px #161616;">Position</span>
<span class="t" style="left:1556.9px;top:281.7px;font-size:12px;line-height:16px;transform:scaleX(1.0127);color:#333;">Both</span>
<span class="t" style="left:1419.0px;top:307.9px;font-size:12px;line-height:16px;transform:scaleX(1.0659);color:#161616;-webkit-text-stroke:0.22px #161616;">Material</span>
<span class="t" style="left:1556.9px;top:307.4px;font-size:12px;line-height:16px;transform:scaleX(1.0579);color:#333;">&lt; default &gt;</span>
<span class="t" style="left:1419.0px;top:333.5px;font-size:12px;line-height:16px;transform:scaleX(0.9998);color:#161616;-webkit-text-stroke:0.22px #161616;">Thickness [mm]</span>
<span class="t" style="left:1555.5px;top:333.5px;font-size:12px;line-height:16px;transform:scaleX(0.8990);color:#1c1c1c;-webkit-text-stroke:0.18px #1c1c1c;">12,0</span>
<span class="t" style="left:1419.0px;top:359.1px;font-size:12px;line-height:16px;transform:scaleX(1.0138);color:#161616;-webkit-text-stroke:0.22px #161616;">Location</span>
<span class="t" style="left:1556.9px;top:358.6px;font-size:12px;line-height:16px;transform:scaleX(1.0127);color:#333;">Both</span>
<span class="t" style="left:1419.0px;top:384.7px;font-size:12px;line-height:16px;transform:scaleX(1.0441);color:#161616;-webkit-text-stroke:0.22px #161616;">X - position [mm]</span>
<span class="t" style="left:1555.5px;top:384.7px;font-size:12px;line-height:16px;transform:scaleX(0.9485);color:#1c1c1c;-webkit-text-stroke:0.18px #1c1c1c;">200</span>
<span class="t" style="left:1419.0px;top:410.3px;font-size:12px;line-height:16px;transform:scaleX(1.0644);color:#161616;-webkit-text-stroke:0.22px #161616;">α - Inclination [°]</span>
<span class="t" style="left:1555.5px;top:410.3px;font-size:12px;line-height:16px;transform:scaleX(0.9588);color:#1c1c1c;-webkit-text-stroke:0.18px #1c1c1c;">0,0</span>
<span class="t" style="left:1419.0px;top:436.0px;font-size:12px;line-height:16px;transform:scaleX(1.0713);color:#161616;-webkit-text-stroke:0.22px #161616;">Width [mm]</span>
<span class="t" style="left:1555.5px;top:436.0px;font-size:12px;line-height:16px;transform:scaleX(0.8972);color:#1c1c1c;-webkit-text-stroke:0.18px #1c1c1c;">0</span>
<span class="t" style="left:1419.0px;top:461.6px;font-size:12px;line-height:16px;transform:scaleX(1.0451);color:#161616;-webkit-text-stroke:0.22px #161616;">Offset top [mm]</span>
<span class="t" style="left:1555.5px;top:461.6px;font-size:12px;line-height:16px;transform:scaleX(0.8972);color:#1c1c1c;-webkit-text-stroke:0.18px #1c1c1c;">0</span>
<span class="t" style="left:1419.0px;top:487.2px;font-size:12px;line-height:16px;transform:scaleX(1.0510);color:#161616;-webkit-text-stroke:0.22px #161616;">Offset bottom [mm]</span>
<span class="t" style="left:1555.5px;top:487.2px;font-size:12px;line-height:16px;transform:scaleX(0.8972);color:#1c1c1c;-webkit-text-stroke:0.18px #1c1c1c;">0</span>
<span class="t" style="left:1419.0px;top:512.8px;font-size:12px;line-height:16px;transform:scaleX(1.0085);color:#161616;-webkit-text-stroke:0.22px #161616;">Repeat count</span>
<span class="t" style="left:1555.5px;top:512.8px;font-size:12px;line-height:16px;transform:scaleX(0.7477);color:#1c1c1c;-webkit-text-stroke:0.18px #1c1c1c;">1</span>
<span class="t" style="left:1419.0px;top:538.4px;font-size:12px;line-height:16px;transform:scaleX(1.0154);color:#161616;-webkit-text-stroke:0.22px #161616;">Gap [mm]</span>
<span class="t" style="left:1555.5px;top:538.4px;font-size:12px;line-height:16px;transform:scaleX(0.8972);color:#1c1c1c;-webkit-text-stroke:0.18px #1c1c1c;">0</span>
<span class="t" style="left:1419.0px;top:564.1px;font-size:12px;line-height:16px;transform:scaleX(1.0173);color:#161616;-webkit-text-stroke:0.22px #161616;">Chamfered corners</span>
<span class="t" style="left:1419.0px;top:589.7px;font-size:12px;line-height:16px;transform:scaleX(1.0122);color:#161616;-webkit-text-stroke:0.22px #161616;">Chamfer cut size [mm]</span>
<span class="t" style="left:1555.5px;top:589.7px;font-size:12px;line-height:16px;transform:scaleX(0.8972);color:#1c1c1c;-webkit-text-stroke:0.18px #1c1c1c;">0</span>
<span class="t" style="left:1419.0px;top:645.5px;font-size:12px;line-height:16px;transform:scaleX(1.0279);color:#161616;-webkit-text-stroke:0.22px #161616;">All welds [mm]</span>
<span class="t" style="left:1551.0px;top:643.9px;font-size:12px;line-height:16px;transform:scaleX(0.8989);color:#777;">0,0</span>
<span class="t" style="left:1609.0px;top:645.4px;font-size:12px;line-height:16px;transform:scaleX(1.0226);color:#333;">&lt; default &gt;</span>
<span class="t" style="left:24.4px;top:1136.9px;font-size:12px;line-height:16px;transform:scaleX(0.9448);color:#777;font-weight:700;">Design code:</span>
<span class="t" style="left:100.0px;top:1136.9px;font-size:12px;line-height:16px;transform:scaleX(0.9597);color:#fff;font-weight:700;">EN</span>
<span class="t" style="left:136.8px;top:1136.9px;font-size:12px;line-height:16px;transform:scaleX(0.9220);color:#777;font-weight:700;">Analysis:</span>
<span class="t" style="left:190.5px;top:1136.9px;font-size:12px;line-height:16px;transform:scaleX(0.9508);color:#fff;font-weight:700;">Capacity design</span>
<span class="t" style="left:298.0px;top:1136.9px;font-size:12px;line-height:16px;transform:scaleX(0.9412);color:#777;font-weight:700;">Units:</span>
<span class="t" style="left:338.7px;top:1136.9px;font-size:12px;line-height:16px;transform:scaleX(1.0448);color:#fff;font-weight:700;">mm</span>
<span class="t" style="left:1796.6px;top:1136.9px;font-size:12px;line-height:16px;transform:scaleX(0.9731);color:#e0691f;">www.</span>
<span class="t" style="left:1825.0px;top:1136.9px;font-size:12px;line-height:16px;transform:scaleX(1.0458);color:#f0f0f0;">ideastatica</span>
<span class="t" style="left:1885.5px;top:1136.9px;font-size:12px;line-height:16px;transform:scaleX(0.8918);color:#e0691f;">.com</span>
</div>
</body></html>
